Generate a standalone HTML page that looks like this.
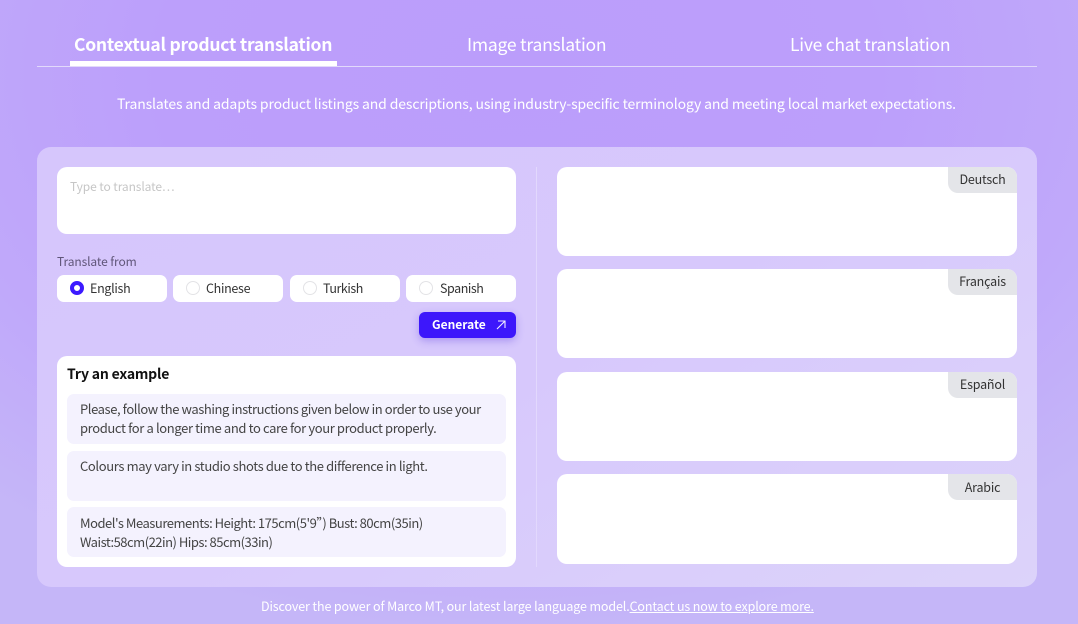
<!DOCTYPE html>
<html><head><meta charset="utf-8"><style>
html,body{margin:0;padding:0}
body{width:1078px;height:624px;overflow:hidden;position:relative;background:radial-gradient(ellipse 800px 560px at 48% 12%,#bb9dfb 0%,#bc9ffb 45%,#c0a9fa 75%,#c5b6f8 100%);font-family:"Noto Sans CJK SC","Liberation Sans",sans-serif;color:#333}
.a{position:absolute}
.t{position:absolute;white-space:nowrap;line-height:20px}
.w{background:#fff;border-radius:10px;position:absolute}
.r{position:absolute;top:275px;width:110px;height:27px;background:#fff;border-radius:7px}
.c{position:absolute;left:13px;top:6px;width:12px;height:12px;border:1px solid #e3e3e6;border-radius:50%}
.l{position:absolute;left:33px;top:3px;font-size:12.5px;letter-spacing:-.3px;line-height:20px;color:#333;white-space:nowrap}
.g{position:absolute;right:0;top:0;width:69px;height:26px;background:#e4e5e9;border-radius:0 10px 0 10px;text-align:center;font-size:12.5px;letter-spacing:-.2px;line-height:24px;color:#333}
.e{position:absolute;left:67px;width:439px;height:50px;background:#f4f2fe;border-radius:7px}
.e div{position:absolute;left:13px;white-space:nowrap;font-size:13px;line-height:19px;color:#444}
</style></head><body>
<div class="t" style="left:74px;top:33px;font-size:17.5px;letter-spacing:-.25px;line-height:24px;font-weight:700;color:#fff">Contextual product translation</div>
<div class="t" style="left:467px;top:33px;font-size:17.5px;letter-spacing:-.23px;line-height:24px;color:#fff">Image translation</div>
<div class="t" style="left:790px;top:33px;font-size:17.5px;letter-spacing:-.25px;line-height:24px;color:#fff">Live chat translation</div>
<div class="a" style="left:37px;top:66px;width:1000px;height:1px;background:#e2d9fb"></div>
<div class="a" style="left:70px;top:61px;width:267px;height:5px;background:#fff"></div>
<div class="t" style="left:117px;top:94px;font-size:14px;letter-spacing:-.13px;color:#fff">Translates and adapts product listings and descriptions, using industry-specific terminology and meeting local market expectations.</div>

<div class="a" style="left:37px;top:147px;width:1000px;height:440px;border-radius:14px;background:linear-gradient(150deg,#d6c6fc 0%,#d7c8fc 50%,#dcd3fa 100%)"></div>
<div class="a" style="left:536px;top:167px;width:1px;height:400px;background:#e2d8fd"></div>

<div class="w" style="left:57px;top:167px;width:459px;height:67px"></div>
<div class="t" style="left:70px;top:177px;font-size:12px;letter-spacing:-.1px;color:#c6c6c6">Type to translate…</div>

<div class="t" style="left:57px;top:252px;font-size:12px;letter-spacing:-.1px;color:#5f5578">Translate from</div>
<div class="r" style="left:57px"><span class="a" style="left:13px;top:6px;width:6px;height:6px;border:4px solid #3c1aff;border-radius:50%;background:#fff"></span><span class="l">English</span></div>
<div class="r" style="left:173px"><span class="c"></span><span class="l">Chinese</span></div>
<div class="r" style="left:290px"><span class="c"></span><span class="l" style="letter-spacing:-.45px">Turkish</span></div>
<div class="r" style="left:406px"><span class="c"></span><span class="l" style="left:34px;letter-spacing:-.45px">Spanish</span></div>

<div class="a" style="left:419px;top:312px;width:97px;height:26px;background:#3d17fb;border-radius:6px;box-shadow:0 3px 8px rgba(70,40,220,.3)"></div>
<div class="t" style="left:432px;top:315px;font-size:12px;font-weight:700;color:#fff">Generate</div>
<svg class="a" style="left:495px;top:319px" width="12" height="12" viewBox="0 0 12 12" fill="none" stroke="#f2eeff" stroke-width="1.1"><path d="M2 10L10 2M3 2h7v7"/></svg>

<div class="w" style="left:57px;top:356px;width:459px;height:211px"></div>
<div class="t" style="left:67px;top:364px;font-size:14px;letter-spacing:-.2px;font-weight:700;color:#111">Try an example</div>
<div class="e" style="top:394px"><div style="top:5px;letter-spacing:-.42px">Please, follow the washing instructions given below in order to use your</div><div style="top:24px;letter-spacing:-.375px">product for a longer time and to care for your product properly.</div></div>
<div class="e" style="top:451px"><div style="top:5px;letter-spacing:-.38px">Colours may vary in studio shots due to the difference in light.</div></div>
<div class="e" style="top:507px"><div style="top:6px;letter-spacing:-.48px">Model's Measurements: Height: 175cm(5'9”) Bust: 80cm(35in)</div><div style="top:25px;letter-spacing:-.5px">Waist:58cm(22in) Hips: 85cm(33in)</div></div>

<div class="w" style="left:557px;top:167px;width:460px;height:89px"><div class="g">Deutsch</div></div>
<div class="w" style="left:557px;top:269px;width:460px;height:89px"><div class="g">Français</div></div>
<div class="w" style="left:557px;top:372px;width:460px;height:89px"><div class="g">Español</div></div>
<div class="w" style="left:557px;top:474px;width:460px;height:90px"><div class="g" style="line-height:26px">Arabic</div></div>

<div class="t" style="left:261px;top:596px;font-size:12.5px;letter-spacing:-.125px;color:#fff">Discover the power of Marco MT, our latest large language model.<span style="text-decoration:underline">Contact us now to explore more.</span></div>
</body></html>
